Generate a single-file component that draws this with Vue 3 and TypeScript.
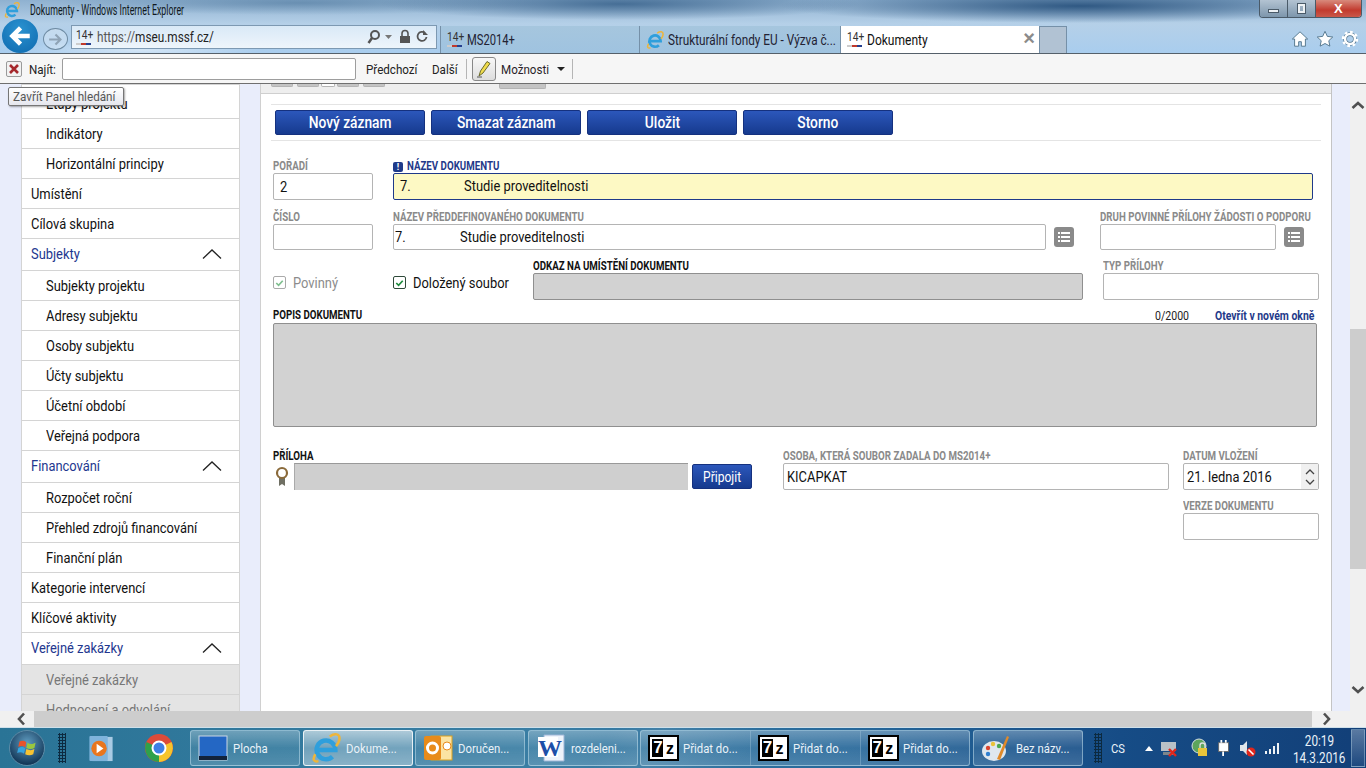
<script setup lang="ts">
interface NavRow { label: string; level: 1 | 2; head?: boolean; muted?: boolean }

const nav: NavRow[] = [
  { label: 'Etapy projektu', level: 2 },
  { label: 'Indikátory', level: 2 },
  { label: 'Horizontální principy', level: 2 },
  { label: 'Umístění', level: 1 },
  { label: 'Cílová skupina', level: 1 },
  { label: 'Subjekty', level: 1, head: true },
  { label: 'Subjekty projektu', level: 2 },
  { label: 'Adresy subjektu', level: 2 },
  { label: 'Osoby subjektu', level: 2 },
  { label: 'Účty subjektu', level: 2 },
  { label: 'Účetní období', level: 2 },
  { label: 'Veřejná podpora', level: 2 },
  { label: 'Financování', level: 1, head: true },
  { label: 'Rozpočet roční', level: 2 },
  { label: 'Přehled zdrojů financování', level: 2 },
  { label: 'Finanční plán', level: 2 },
  { label: 'Kategorie intervencí', level: 1 },
  { label: 'Klíčové aktivity', level: 1 },
  { label: 'Veřejné zakázky', level: 1, head: true },
  { label: 'Veřejné zakázky', level: 2, muted: true },
  { label: 'Hodnocení a odvolání', level: 2, muted: true },
]

const actions = ['Nový záznam', 'Smazat záznam', 'Uložit', 'Storno']
</script>

<template>
  <div class="screen">
    <svg class="defs" width="0" height="0">
      <symbol id="ie-logo" viewBox="0 0 24 24">
        <path d="M6 13.500h13.500a7.500 7.500 0 1 0-2.300 5.400" fill="none" stroke="#2f9fdc" stroke-width="3.600" />
        <path d="M3.500 17C1 21 2 23.500 6 22.500M15 2.800C19 0 23 0.500 22.800 4.500c-.1 2-1.200 4-2.800 6" fill="none" stroke="#eeb53a" stroke-width="2" />
      </symbol>
    </svg>

    <header class="chrome">
      <div class="title-row">
        <svg class="ie-small"><use href="#ie-logo" /></svg>
        <span class="tx title-text">Dokumenty - Windows Internet Explorer</span>
        <div class="win-btns">
          <span class="win-btn"><i class="min-mark"></i></span>
          <span class="win-btn"><i class="max-mark"></i></span>
          <span class="win-btn close">X</span>
        </div>
      </div>
      <div class="nav-row">
        <span class="back">
          <svg viewBox="0 0 24 24" width="26" height="26"><path d="M21 12H6M12.500 4.500 5 12l7.500 7.500" fill="none" stroke="#fff" stroke-width="4.200" /></svg>
        </span>
        <span class="forward">
          <svg viewBox="0 0 24 24" width="17" height="17"><path d="M3 12h15M12 5l7 7-7 7" fill="none" stroke="#8fa3b5" stroke-width="3" /></svg>
        </span>
        <div class="address">
          <span class="fav"><b>14+</b><i></i></span>
          <span class="url"><span class="tx url-tx"><em>https://</em>mseu.mssf.cz/</span></span>
          <svg class="addr-icons" viewBox="0 0 64 18" width="64" height="18">
            <circle cx="8" cy="7" r="4" fill="none" stroke="#555" stroke-width="2" />
            <path d="M5 10 1.500 15" stroke="#555" stroke-width="2.500" />
            <path d="M18 7h7l-3.500 4z" fill="#777" />
            <path d="M35 8V5.500a3 3 0 0 1 6 0V8" fill="none" stroke="#555" stroke-width="1.600" />
            <rect x="33" y="8" width="10" height="7" fill="#555" />
            <path d="M58 5a4.500 4.500 0 1 0 1.500 4" fill="none" stroke="#555" stroke-width="1.800" />
            <path d="M56 2v5h5z" fill="#555" />
          </svg>
        </div>
        <div class="tab">
          <span class="fav"><b>14+</b><i></i></span><span class="tx tab-text ms-tx">MS2014+</span>
        </div>
        <div class="tab">
          <svg class="tab-ie"><use href="#ie-logo" /></svg>
          <span class="tx tab-text">Strukturální fondy EU - Výzva č...</span>
        </div>
        <div class="tab active">
          <span class="fav"><b>14+</b><i></i></span><span class="tx tab-text">Dokumenty</span>
          <span class="tab-x">×</span>
        </div>
        <div class="tab-new"></div>
        <div class="tools">
          <svg viewBox="0 0 20 20" width="18" height="18"><path d="M10 2 1.500 10H4v8h4.500v-5h3v5H16v-8h2.500z" fill="#fff" stroke="#4d7088" stroke-width="1" /></svg>
          <svg viewBox="0 0 20 20" width="18" height="18"><path d="m10 1.500 2.600 5.600 6 .7-4.400 4.100 1.200 6L10 15l-5.400 2.900 1.200-6L1.400 7.800l6-.7z" fill="#fff" stroke="#4d7088" stroke-width="1" /></svg>
          <svg viewBox="0 0 20 20" width="18" height="18"><circle cx="10" cy="10" r="5.500" fill="none" stroke="#4d7088" stroke-width="4.200" /><circle cx="10" cy="10" r="5.500" fill="none" stroke="#fff" stroke-width="2.800" /><circle cx="10" cy="10" r="7.800" fill="none" stroke="#fff" stroke-width="2.600" stroke-dasharray="3 3.100" /></svg>
        </div>
      </div>
    </header>

    <div class="findbar">
      <span class="find-x">
        <svg viewBox="0 0 12 12" width="12" height="12"><path d="m2 2 8 8M10 2l-8 8" stroke="#a5282c" stroke-width="2.600" /></svg>
      </span>
      <span class="find-label"><span class="tx">Najít:</span></span>
      <span class="find-input"></span>
      <span class="find-link prev"><span class="tx">Předchozí</span></span>
      <span class="find-link next"><span class="tx">Další</span></span>
      <span class="find-sep"></span>
      <span class="pen">
        <svg viewBox="0 0 20 20" width="20" height="20"><path d="m5 17 1.500-5L13 2.500l3 2L9 14z" fill="#f1dc4c" stroke="#6a6a2c" stroke-width="1" /><path d="M3 18h5" stroke="#555" /></svg>
      </span>
      <span class="find-link opts"><span class="tx">Možnosti</span></span>
      <span class="opts-arrow"></span>
      <span class="find-sep"></span>
    </div>
    <div class="tooltip"><span class="tx tip-tx">Zavřít Panel hledání</span></div>

    <div class="page">
      <aside class="side">
        <nav class="side-nav">
          <div
            v-for="(row, i) in nav"
            :key="i"
            class="nav-item"
            :class="{ sub: row.level === 2, head: row.head, muted: row.muted }"
          >
            <span class="tx">{{ row.label }}</span>
            <svg v-if="row.head" class="caret" viewBox="0 0 20 10" width="20" height="10"><path d="M1 9.500 10 1l9 8.500" fill="none" stroke="#222" stroke-width="1.300" /></svg>
          </div>
        </nav>
      </aside>

      <main class="content">
        <div class="tabstrip">
          <i class="stub s1"></i><i class="stub s2"></i><i class="stub s3"></i><i class="stub s4"></i><i class="stub s5"></i><i class="stub s6"></i>
        </div>
        <div class="actions">
          <button v-for="a in actions" :key="a" class="btn action"><span class="tx mid">{{ a }}</span></button>
        </div>

        <div class="form">
          <div class="row r1">
            <label class="field w100">
              <span class="cap">POŘADÍ</span>
              <span class="inp"><span class="tx">2</span></span>
            </label>
            <label class="field name-field">
              <span class="cap-wrap"><i class="req-mark">!</i><span class="cap req">NÁZEV DOKUMENTU</span></span>
              <span class="inp yellow"><span class="num tx">7.</span><span class="tx">Studie proveditelnosti</span></span>
            </label>
          </div>

          <div class="row r2">
            <label class="field w100">
              <span class="cap">ČÍSLO</span>
              <span class="inp"></span>
            </label>
            <label class="field predef">
              <span class="cap">NÁZEV PŘEDDEFINOVANÉHO DOKUMENTU</span>
              <span class="inp tight"><span class="num2 tx">7.</span><span class="tx">Studie proveditelnosti</span></span>
            </label>
            <span class="list-btn"><i></i></span>
            <label class="field druh">
              <span class="cap">DRUH POVINNÉ PŘÍLOHY ŽÁDOSTI O PODPORU</span>
              <span class="inp"></span>
            </label>
            <span class="list-btn"><i></i></span>
          </div>

          <div class="row r3">
            <span class="check off w120">
              <i class="box"><svg viewBox="0 0 12 12" width="12" height="12"><path d="m2.500 6 2.500 2.500 4.500-5" fill="none" stroke="#7fbf8f" stroke-width="1.800" /></svg></i>
              <span class="tx">Povinný</span>
            </span>
            <span class="check doloz">
              <i class="box"><svg viewBox="0 0 12 12" width="12" height="12"><path d="m2.500 6 2.500 2.500 4.500-5" fill="none" stroke="#1c8a3c" stroke-width="1.800" /></svg></i>
              <span class="tx">Doložený soubor</span>
            </span>
            <label class="field odkaz">
              <span class="cap dark">ODKAZ NA UMÍSTĚNÍ DOKUMENTU</span>
              <span class="inp gray"></span>
            </label>
            <label class="field typ">
              <span class="cap">TYP PŘÍLOHY</span>
              <span class="inp"></span>
            </label>
          </div>

          <div class="popis">
            <div class="popis-head">
              <span class="head-left"><span class="cap dark">POPIS DOKUMENTU</span></span>
              <span class="count"><span class="tx">0/2000</span></span>
              <span class="open-link"><span class="tx">Otevřít v novém okně</span></span>
            </div>
            <div class="textarea"></div>
          </div>

          <div class="row r5">
            <div class="field priloha">
              <span class="cap dark">PŘÍLOHA</span>
              <div class="file-line">
                <svg class="seal" viewBox="0 0 14 22" width="14" height="22">
                  <path d="M4 11v9l3-2 3 2v-9" fill="#6f6f63" />
                  <circle cx="7" cy="7" r="5" fill="#fff" stroke="#8a6a3a" stroke-width="2.200" />
                </svg>
                <span class="file-box"></span>
                <button class="btn attach"><span class="tx mid">Připojit</span></button>
              </div>
            </div>
            <label class="field osoba">
              <span class="cap">OSOBA, KTERÁ SOUBOR ZADALA DO MS2014+</span>
              <span class="inp"><span class="tx">KICAPKAT</span></span>
            </label>
            <label class="field datum">
              <span class="cap">DATUM VLOŽENÍ</span>
              <span class="inp spin"><span class="tx">21. ledna 2016</span>
                <span class="spinner">
                  <svg viewBox="0 0 10 18" width="10" height="18"><path d="m1 6 4-4 4 4M1 12l4 4 4-4" fill="none" stroke="#444" stroke-width="1.300" /></svg>
                </span>
              </span>
            </label>
          </div>

          <div class="row r6">
            <label class="field datum">
              <span class="cap">VERZE DOKUMENTU</span>
              <span class="inp"></span>
            </label>
          </div>
        </div>
      </main>

      <div class="gutter"></div>
      <div class="vscroll">
        <svg viewBox="0 0 14 10" width="14" height="10"><path d="m1.500 8 5.500-5 5.500 5" fill="none" stroke="#505050" stroke-width="2.600" /></svg>
        <div class="vtrack"><div class="vthumb"></div></div>
        <svg viewBox="0 0 14 10" width="14" height="10"><path d="m1.500 2 5.500 5 5.500-5" fill="none" stroke="#505050" stroke-width="2.600" /></svg>
      </div>
    </div>

    <div class="hscroll">
      <svg viewBox="0 0 10 14" width="10" height="14"><path d="M8 1.500 3 7l5 5.500" fill="none" stroke="#505050" stroke-width="2.600" /></svg>
      <div class="htrack"></div>
      <svg viewBox="0 0 10 14" width="10" height="14"><path d="m2 1.500 5 5.500-5 5.500" fill="none" stroke="#505050" stroke-width="2.600" /></svg>
    </div>

    <footer class="taskbar">
      <span class="orb">
        <svg viewBox="0 0 20 20" width="23" height="23">
          <path d="M3 4c2-1 4-1 6 .5L8 9C6 7.500 4.500 7.500 2 8.500z" fill="#e8532c" />
          <path d="M10 5c2 1.500 4 1.500 7 0l-1 4.500c-2.500 1.500-5 1-7 0z" fill="#9ac83f" />
          <path d="M2 9.500c2.500-1 4-1 6 .5l-1 4.500c-2-1.500-4-1.500-6-.5z" fill="#35a4e0" />
          <path d="M9 10.500c2 1 4.500 1.500 7 0l-1 4.500c-2.500 1.500-5 1-7 0z" fill="#f7c331" />
        </svg>
      </span>
      <span class="grip"></span>
      <span class="pin">
        <svg viewBox="0 0 26 30" width="26" height="29"><rect x="4" y="3" width="21" height="25" fill="#a9cbe4" /><rect x="1" y="2" width="19" height="26" rx="1" fill="#7fb4dc" /><circle cx="11" cy="15" r="8" fill="#e8761e" /><path d="m8.500 10 7 5-7 5z" fill="#fff" /></svg>
      </span>
      <span class="pin chrome-pin">
        <svg viewBox="0 0 30 30" width="30" height="30">
          <circle cx="15" cy="15" r="14" fill="#dd4b39" />
          <path d="M15 15 27.500 9A14 14 0 0 1 15 29z" fill="#f6c42c" />
          <path d="M15 15 15 29A14 14 0 0 1 2.500 9z" fill="#2fa14a" />
          <circle cx="15" cy="15" r="6.500" fill="#3f80e4" stroke="#fff" stroke-width="2" />
        </svg>
      </span>
      <div class="task">
        <svg class="t-ic" viewBox="0 0 30 30" width="30" height="30"><rect x="1" y="3" width="28" height="24" fill="#2467c4" stroke="#ccd8e4" /><rect x="1" y="23" width="28" height="4" fill="#12233c" /></svg>
        <span class="tx">Plocha</span>
      </div>
      <div class="task on">
        <svg class="t-ic" width="30" height="30"><use href="#ie-logo" /></svg>
        <span class="tx">Dokume...</span>
      </div>
      <div class="task">
        <svg class="t-ic" viewBox="0 0 30 30" width="30" height="30"><rect x="8" y="3" width="21" height="24" fill="#fbe3a2" stroke="#d9a021" /><rect x="1" y="3" width="17" height="24" rx="2" fill="#e88b1a" /><circle cx="9.500" cy="15" r="5" fill="none" stroke="#fff" stroke-width="3" /><circle cx="24" cy="13" r="4" fill="#fff" stroke="#e88b1a" /></svg>
        <span class="tx">Doručen...</span>
      </div>
      <div class="task">
        <svg class="t-ic" viewBox="0 0 30 30" width="30" height="30"><path d="M8 2h20v26H8z" fill="#eef3fa" stroke="#9db5d6" /><path d="M2 4h20v20H2z" fill="#fff" /><text x="2" y="23" class="word-w">W</text></svg>
        <span class="tx">rozdeleni...</span>
      </div>
      <div class="task group">
        <div v-for="n in 3" :key="n" class="sub-task">
          <span class="seven"><b>7</b><b class="z">z</b></span>
          <span class="tx">Přidat do...</span>
        </div>
      </div>
      <div class="task">
        <svg class="t-ic" viewBox="0 0 30 30" width="30" height="30"><ellipse cx="13" cy="18" rx="12" ry="10" fill="#dfe7ee" /><circle cx="7" cy="15" r="2.200" fill="#d9442e" /><circle cx="12" cy="11" r="2.200" fill="#e9c33a" /><circle cx="18" cy="13" r="2.200" fill="#4aa851" /><circle cx="7" cy="21" r="2.200" fill="#2f7fd0" /><path d="m16 26 10-23 2 1-9 23z" fill="#e08a2a" /></svg>
        <span class="tx">Bez názv...</span>
      </div>
      <span class="grip tray-grip"></span>
      <div class="tray">
        <span class="lang"><span class="tx">CS</span></span>
        <span class="up"></span>
        <svg viewBox="0 0 18 18" width="18" height="18"><rect x="1" y="3" width="15" height="9" fill="#b9c1c7" /><rect x="3" y="13" width="11" height="3" fill="#7d868c" /><path d="m9 10 7 7M16 10l-7 7" stroke="#e0261c" stroke-width="2.400" /></svg>
        <svg class="lock-ic" viewBox="0 0 18 20" width="18" height="20"><circle cx="8" cy="8" r="7" fill="#5da55c" stroke="#d5dde2" /><rect x="7" y="10" width="9" height="8" fill="#e8c43a" /><path d="M9 10V7.500a2.500 2.500 0 0 1 5 0V10" fill="none" stroke="#ddd" stroke-width="1.400" /></svg>
        <svg viewBox="0 0 18 20" width="16" height="20"><rect x="3" y="4" width="11" height="10" fill="#fff" stroke="#666" /><path d="M6 1v3M11 1v3" stroke="#fff" stroke-width="2" /><path d="M8 14v5" stroke="#fff" stroke-width="2" /></svg>
        <svg viewBox="0 0 18 20" width="18" height="20"><path d="M1 7h3l4-4v14l-4-4H1z" fill="#dfe6ea" /><circle cx="12" cy="14" r="4.500" fill="#e0261c" /><path d="m9.500 11.500 5 5" stroke="#fff" stroke-width="1.600" /></svg>
        <svg viewBox="0 0 16 16" width="16" height="16"><path d="M1 14h2v-3H1zM5 14h2V9H5zM9 14h2V6H9zM13 14h2V3h-2z" fill="#eef2f5" /></svg>
      </div>
      <div class="clock"><span class="tx mid">20:19</span><span class="tx mid">14.3.2016</span></div>
      <span class="show-desk"></span>
    </footer>
  </div>
</template>

<style>
html, body { margin: 0; padding: 0; background: #fff; overflow: hidden; }
</style>

<style scoped>
.screen {
  position: relative;
  width: 1366px;
  height: 768px;
  display: flex;
  flex-direction: column;
  overflow: hidden;
  font-family: Roboto, "Liberation Sans", Arial, sans-serif;
  color: #111;
}
.defs { position: absolute; }
i { font-style: normal; display: block; }

/* reference je vodorovně stlačená, text se zužuje stejně */
.tx {
  display: inline-block;
  white-space: nowrap;
  transform: scaleX(.86);
  transform-origin: left center;
}
.tx.mid { transform-origin: center; }

/* ---- okno prohlížeče ---- */
.chrome {
  height: 54px;
  flex-shrink: 0;
  border-bottom: 1px solid #55606a;
  box-sizing: border-box;
  background:
    radial-gradient(ellipse 300px 17px at 1080px 6px, rgba(36,78,122,.9), transparent),
    radial-gradient(ellipse 240px 16px at 620px 4px, rgba(50,92,134,.8), transparent),
    radial-gradient(ellipse 240px 12px at 300px 3px, rgba(70,112,150,.55), transparent),
    radial-gradient(ellipse 120px 10px at 140px 50px, rgba(255,255,255,.5), transparent),
    linear-gradient(180deg, #8fb1d0 0%, #b5d0e8 45%, #a9cdee 100%);
}
.title-row {
  height: 19px;
  display: flex;
  align-items: center;
  position: relative;
  padding-left: 4px;
}
.ie-small { width: 16px; height: 16px; margin-top: 1px; }
.title-text { margin-left: 10px; margin-top: 1px; font-size: 14px; color: #101820; transform: scaleX(.63); }
.win-btns {
  position: absolute;
  right: 4px;
  top: 0;
  width: 103px;
  height: 18px;
  display: flex;
  border: 1px solid #4a5a68;
  border-top: 0;
  border-radius: 0 0 4px 4px;
  box-sizing: border-box;
  overflow: hidden;
}
.win-btn {
  flex: 1;
  display: flex;
  align-items: center;
  justify-content: center;
  background: linear-gradient(180deg, #b3c3d2, #7d96ac);
  border-right: 1px solid #4a5a68;
}
.win-btn.close {
  flex: 1.700;
  border-right: 0;
  background: linear-gradient(180deg, #d88a7c, #c23a2e 60%, #c9584a);
  color: #fff;
  font: bold 13px "Liberation Sans", sans-serif;
}
.min-mark { width: 11px; height: 4px; box-sizing: border-box; background: #eef2f5; border: 1px solid #4a5a68; margin-top: 4px; }
.max-mark { width: 7px; height: 9px; border: 2px solid #eef2f5; outline: 1px solid #4a5a68; box-sizing: border-box; }

.nav-row {
  height: 34px;
  display: flex;
  align-items: flex-end;
  padding-left: 2px;
  position: relative;
}
.back {
  width: 36px;
  height: 34px;
  border-radius: 50%;
  background: radial-gradient(circle at 50% 30%, #2a92d0, #0e69ae);
  display: flex;
  align-items: center;
  justify-content: center;
}
.forward {
  width: 25px;
  height: 22px;
  margin: 0 3px 3px 5px;
  box-sizing: border-box;
  border: 1px solid #6e8ba3;
  border-radius: 50%;
  display: flex;
  align-items: center;
  justify-content: center;
  background: rgba(255,255,255,.25);
}
.address {
  width: 366px;
  height: 24px;
  margin-bottom: 4px;
  box-sizing: border-box;
  display: flex;
  align-items: center;
  padding-left: 4px;
  background: linear-gradient(180deg, #d9e9f7, #eef5fb);
  border: 1px solid #7d99b2;
}
.fav {
  position: relative;
  width: 16px;
  height: 15px;
  flex-shrink: 0;
  font-size: 12px;
  line-height: 11px;
  color: #333;
}
.fav b { font-weight: 400; display: inline-block; transform: scaleX(.85); transform-origin: left; }
.fav i {
  position: absolute;
  left: 0;
  bottom: 0;
  width: 15px;
  height: 2px;
  background: linear-gradient(90deg, #ccc 33%, #c0392b 33% 66%, #25408f 66%);
}
.url { margin-left: 5px; font-size: 14px; color: #222; flex: 1; }
.url-tx { transform: scaleX(.84); }
.url em { font-style: normal; color: #555; }
.addr-icons { margin-right: 5px; }

.tab {
  width: 201px;
  height: 27px;
  box-sizing: border-box;
  display: flex;
  align-items: center;
  padding-left: 6px;
  background: linear-gradient(180deg, #a6c6de, #9fc3e0);
  border: 1px solid #7590a8;
  border-width: 0 1px 0 0;
  font-size: 14px;
  color: #223;
}
.address + .tab { margin-left: 3px; width: 200px; border-left: 1px solid #7590a8; }
.tab-ie { width: 18px; height: 18px; flex-shrink: 0; }
.tab-text { margin-left: 4px; }
.tab-ie + .tab-text { transform: scaleX(.84); margin-left: 4px; }
.ms-tx { transform: scaleX(.8); }
.tab.active {
  width: 199px;
  position: relative;
  background: #fff;
  color: #111;
}
.tab-x { position: absolute; right: 4px; top: 1px; font: bold 20px "Liberation Sans", sans-serif; color: #8b8b8b; }
.tab-new {
  width: 27px;
  height: 27px;
  background: #b1c2d3;
  box-sizing: border-box;
  border: 1px solid #7590a8;
  border-width: 1px 1px 0 0;
}
.tools {
  position: absolute;
  right: 7px;
  top: 11px;
  display: flex;
  gap: 7px;
}

.findbar {
  height: 30px;
  flex-shrink: 0;
  box-sizing: border-box;
  display: flex;
  align-items: center;
  padding-left: 6px;
  background: #f6f6f6;
  border-bottom: 1px solid #6f6f6f;
  font-size: 13.500px;
  color: #222;
}
.find-x {
  width: 16px;
  height: 16px;
  box-sizing: border-box;
  border: 1px solid #9a9a9a;
  border-radius: 2px;
  display: flex;
  align-items: center;
  justify-content: center;
  background: #f2f2f2;
}
.find-label { margin-left: 7px; width: 33px; }
.find-input {
  width: 294px;
  height: 22px;
  box-sizing: border-box;
  background: #fff;
  border: 1px solid #9d9d9d;
  border-radius: 2px;
}
.prev { margin-left: 10px; width: 66px; }
.next { width: 34px; }
.find-sep { width: 1px; height: 20px; background: #b5b5b5; }
.pen {
  width: 24px;
  height: 24px;
  margin: 0 5px;
  box-sizing: border-box;
  border: 1px solid #888;
  border-radius: 3px;
  display: flex;
  align-items: center;
  justify-content: center;
  background: linear-gradient(180deg, #f8f8f8, #ddd);
}
.opts { width: 56px; color: #2a1e2a; }
.opts-arrow {
  width: 0;
  height: 0;
  border: 4px solid transparent;
  border-top: 4px solid #222;
  border-bottom: 0;
  margin-right: 7px;
}
.tooltip {
  position: absolute;
  left: 8px;
  top: 87px;
  z-index: 5;
  height: 19px;
  line-height: 18px;
  width: 116px;
  padding-left: 4px;
  box-sizing: border-box;
  font-size: 13px;
  color: #575757;
  background: linear-gradient(180deg, #fff, #e6e7ee);
  border: 1px solid #767676;
  border-radius: 2px;
  box-shadow: 1px 1px 2px rgba(0,0,0,.35);
}
.tip-tx { transform: scaleX(.9); }

/* ---- stránka ---- */
.page {
  flex: 1;
  min-height: 0;
  display: flex;
  background: #fff;
}
.side {
  width: 261px;
  flex-shrink: 0;
  box-sizing: border-box;
  padding-left: 21px;
  overflow: hidden;
  background: #e9edfb;
  border-right: 1px solid #d0d0d0;
}
.side-nav {
  width: 219px;
  box-sizing: border-box;
  background: #fff;
  border: 1px solid #d4d4d4;
  border-width: 1px 1px 0;
  padding-top: 4px;
}
.nav-item {
  height: 30px;
  box-sizing: border-box;
  display: flex;
  align-items: center;
  justify-content: space-between;
  padding: 0 17px 0 9px;
  border-bottom: 1px solid #d4d4d4;
  font-size: 15px;
  color: #111;
}
.nav-item.sub { padding-left: 24px; }
.nav-item.head { height: 32px; padding-bottom: 2px; color: #23378f; }
.nav-item.muted { background: #e4e4e4; color: #777; }

.content {
  flex: 1;
  min-width: 0;
  display: flex;
  flex-direction: column;
}
.tabstrip {
  height: 10px;
  flex-shrink: 0;
  box-sizing: border-box;
  background: #eee;
  border-bottom: 1px solid #cfcfcf;
  display: flex;
  align-items: flex-start;
  padding-left: 10px;
}
.stub { height: 3px; background: #c4c4c4; border: 1px solid #b4b4b4; border-top: 0; border-radius: 0 0 2px 2px; box-sizing: border-box; }
.s1 { width: 22px; margin-right: 4px; }
.s2 { width: 22px; margin-right: 2px; }
.s3 { width: 14px; margin-right: 2px; background: #fff; }
.s4 { width: 22px; margin-right: 4px; }
.s5 { width: 22px; }
.s6 { width: 47px; height: 5px; margin-left: 114px; }

.actions {
  margin: 10px 10px 0 10px;
  height: 37px;
  box-sizing: border-box;
  display: flex;
  gap: 6px;
  padding: 5px 0 0 4px;
  border-top: 1px solid #e4e4e4;
  border-bottom: 1px solid #e4e4e4;
}
.btn {
  font-family: inherit;
  color: #fff;
  border: 1px solid #15317f;
  border-radius: 2px;
  background: linear-gradient(180deg, #2c57bb 0%, #163a8e 100%);
  padding: 0;
}
.action { width: 150px; height: 25px; font-size: 16px; font-weight: 500; }

.form {
  padding: 19px 12px 0 12px;
  display: flex;
  flex-direction: column;
}
.row { display: flex; align-items: flex-start; }
.field { display: flex; flex-direction: column; flex-shrink: 0; }
.w100 { width: 100px; margin-right: 20px; }
.cap {
  display: block;
  width: max-content;
  height: 13px;
  line-height: 13px;
  font-size: 12px;
  font-weight: 700;
  color: #8a8a8a;
  white-space: nowrap;
  transform: scaleX(.81);
  transform-origin: left center;
}
.cap.dark { color: #111; }
.cap.req { color: #1f3a8a; }
.cap-wrap { display: flex; align-items: center; height: 13px; }
.req-mark {
  width: 10px;
  height: 10px;
  margin-right: 4px;
  border-radius: 2px;
  background: #1f3a8a;
  color: #fff;
  font-size: 9px;
  font-weight: 700;
  line-height: 10px;
  text-align: center;
}
.inp {
  height: 27px;
  box-sizing: border-box;
  display: flex;
  align-items: center;
  padding-left: 6px;
  font-size: 15px;
  color: #111;
  background: #fff;
  border: 1px solid #b4b4b4;
  border-radius: 2px;
}
.name-field { width: 920px; }
.yellow { background: #fdf9c4; border-color: #1f3a8a; padding-bottom: 1px; }
.num { width: 64px; }
.num2 { width: 65px; }
.tight { padding-left: 1px; }
.r2 { margin-top: 11px; }
.r2 .inp { height: 26px; }
.predef { width: 653px; }
.list-btn {
  width: 20px;
  height: 20px;
  margin: 16px 0 0 8px;
  flex-shrink: 0;
  border-radius: 3px;
  background: #8a8a8a;
  display: flex;
  align-items: center;
  justify-content: center;
}
.list-btn i {
  width: 12px;
  height: 10px;
  background:
    linear-gradient(90deg, #fff 2px, transparent 2px 3px, #fff 3px) 0 0 / 12px 2px no-repeat,
    linear-gradient(90deg, #fff 2px, transparent 2px 3px, #fff 3px) 0 4px / 12px 2px no-repeat,
    linear-gradient(90deg, #fff 2px, transparent 2px 3px, #fff 3px) 0 8px / 12px 2px no-repeat;
}
.druh { width: 176px; margin-left: 26px; }
.r3 { margin-top: 10px; }
.check {
  display: flex;
  align-items: center;
  gap: 7px;
  height: 19px;
  margin-top: 13px;
  font-size: 15px;
}
.check.off { color: #8c8c8c; }
.w120 { width: 120px; flex-shrink: 0; }
.doloz { width: 140px; flex-shrink: 0; }
.box {
  width: 13px;
  height: 13px;
  box-sizing: border-box;
  border: 1px solid #2f4a3a;
  border-radius: 2px;
  display: flex;
  align-items: center;
  justify-content: center;
  background: #fff;
}
.off .box { border-color: #aaa; }
.odkaz { width: 550px; }
.typ { width: 216px; margin-left: 20px; }
.gray { background: #d2d2d2; border-color: #8f8f8f; }
.popis { margin-top: 8px; }
.popis-head {
  height: 15px;
  display: flex;
  align-items: center;
  width: 1044px;
}
.head-left { flex: 1; }
.count { font-size: 12px; width: 60px; color: #222; }
.count .tx { transform: scaleX(.88); }
.open-link { font-size: 12px; font-weight: 700; color: #1f3a8a; width: 100px; margin-right: 2px; }
.open-link .tx { transform: scaleX(.87); }
.textarea {
  width: 1044px;
  height: 104px;
  box-sizing: border-box;
  background: #d2d2d2;
  border: 1px solid #8f8f8f;
  border-radius: 2px;
}
.r5 { margin-top: 23px; }
.priloha { width: 510px; }
.file-line { display: flex; align-items: center; }
.seal { margin: 0 5px 0 2px; }
.file-box {
  width: 394px;
  height: 27px;
  box-sizing: border-box;
  background: #cfcfcf;
  border-top: 1px solid #999;
  border-left: 1px solid #aaa;
}
.attach { width: 60px; height: 25px; margin-left: 4px; font-size: 14px; }
.osoba { width: 386px; margin-right: 14px; }
.osoba .inp { padding-left: 3px; }
.datum { width: 136px; }
.spin { position: relative; padding-left: 3px; }
.spinner {
  position: absolute;
  right: 0;
  top: 0;
  bottom: 0;
  width: 17px;
  background: #f0f0f0;
  display: flex;
  align-items: center;
  justify-content: center;
}
.r6 { margin-top: 10px; justify-content: flex-end; }

.gutter { width: 19px; flex-shrink: 0; background: #e9edfb; border-left: 1px solid #c4c4c4; box-sizing: border-box; }
.vscroll {
  width: 16px;
  flex-shrink: 0;
  display: flex;
  flex-direction: column;
  align-items: center;
  padding: 16px 0;
  background: #f0f0f0;
  box-sizing: border-box;
}
.vtrack { flex: 1; width: 100%; padding: 219px 0 116px; box-sizing: border-box; }
.vthumb { height: 100%; background: #cdcdcd; }

.hscroll {
  height: 16px;
  flex-shrink: 0;
  display: flex;
  align-items: center;
  padding: 0 34px 0 16px;
  background: #f0f0f0;
}
.htrack { flex: 1; height: 100%; margin: 0 10px 0 8px; background: #cdcdcd; }

/* ---- hlavní panel ---- */
.taskbar {
  height: 41px;
  flex-shrink: 0;
  box-sizing: border-box;
  position: relative;
  display: flex;
  align-items: center;
  color: #eaf2f8;
  font-size: 13.500px;
  background:
    linear-gradient(115deg, transparent 44%, rgba(255,255,255,.08) 48%, transparent 55%),
    linear-gradient(90deg, #2a7496 0%, #3a7ea4 40%, #27689a 62%, #164c86 82%, #123f78 100%);
  border-top: 1px solid #cfe0ea;
}
.orb {
  width: 36px;
  height: 36px;
  margin-left: 9px;
  border-radius: 50%;
  border: 1px solid #5d8ba6;
  box-sizing: border-box;
  background: radial-gradient(circle at 50% 35%, #5f9cc0, #14395a 75%);
  display: flex;
  align-items: center;
  justify-content: center;
  flex-shrink: 0;
}
.grip {
  width: 8px;
  height: 30px;
  margin-left: 13px;
  background-image: radial-gradient(#0c2a40 1px, transparent 1.200px);
  background-size: 3px 3px;
  flex-shrink: 0;
}
.pin { width: 30px; display: flex; justify-content: center; margin-left: 20px; flex-shrink: 0; }
.chrome-pin { margin-left: 28px; margin-right: 16px; }
.task {
  width: 110px;
  height: 36px;
  margin-right: 2.600px;
  flex-shrink: 0;
  box-sizing: border-box;
  display: flex;
  align-items: center;
  gap: 5px;
  padding-left: 7px;
  border: 1px solid rgba(190,220,235,.55);
  border-radius: 3px;
  background: linear-gradient(180deg, rgba(255,255,255,.3), rgba(255,255,255,.08) 50%, rgba(255,255,255,.16));
  white-space: nowrap;
  overflow: hidden;
}
.task .tx { transform: scaleX(.84); }
.task.on { background: linear-gradient(180deg, rgba(255,255,255,.6), rgba(255,255,255,.3) 50%, rgba(255,255,255,.42)); border-color: rgba(255,255,255,.8); }
.t-ic { flex-shrink: 0; }
.word-w { font: bold 24px "Liberation Serif", serif; fill: #1d4fa8; }
.task.group { width: 330px; padding: 0; gap: 0; }
.sub-task {
  flex: 1;
  height: 100%;
  display: flex;
  align-items: center;
  gap: 4px;
  padding-left: 7px;
  box-sizing: border-box;
  border-right: 1px solid rgba(190,220,235,.3);
}
.sub-task:last-child { border-right: 0; }
.seven {
  width: 31px;
  height: 26px;
  box-sizing: border-box;
  background: #fff;
  border: 2px solid #000;
  display: flex;
  flex-shrink: 0;
  padding: 2px;
  gap: 1px;
  font-family: "Liberation Sans", sans-serif;
}
.seven b { flex: 1; background: #000; color: #fff; text-align: center; font-size: 17px; line-height: 18px; }
.seven .z { background: #fff; color: #000; font-size: 16px; line-height: 19px; }
.tray-grip { margin-left: 8px; }
.tray { display: flex; align-items: center; gap: 7px; margin-left: 9px; }
.lang { width: 30px; margin-right: -3px; font-size: 13px; }
.up { width: 0; height: 0; border: 4px solid transparent; border-bottom: 5px solid #fff; border-top: 0; }
.lock-ic { margin-left: 6px; }
.clock {
  position: absolute;
  right: 21px;
  top: 2px;
  bottom: 0;
  width: 52px;
  display: flex;
  flex-direction: column;
  justify-content: center;
  align-items: center;
  gap: 3px;
  font-size: 14px;
  line-height: 14px;
}
.clock .tx { transform: scaleX(.84); }
.show-desk {
  position: absolute;
  right: 1px;
  top: 1px;
  bottom: 1px;
  width: 12px;
  border: 1px solid rgba(190,220,235,.4);
  background: linear-gradient(180deg, rgba(255,255,255,.3), rgba(255,255,255,.05));
}
</style>
